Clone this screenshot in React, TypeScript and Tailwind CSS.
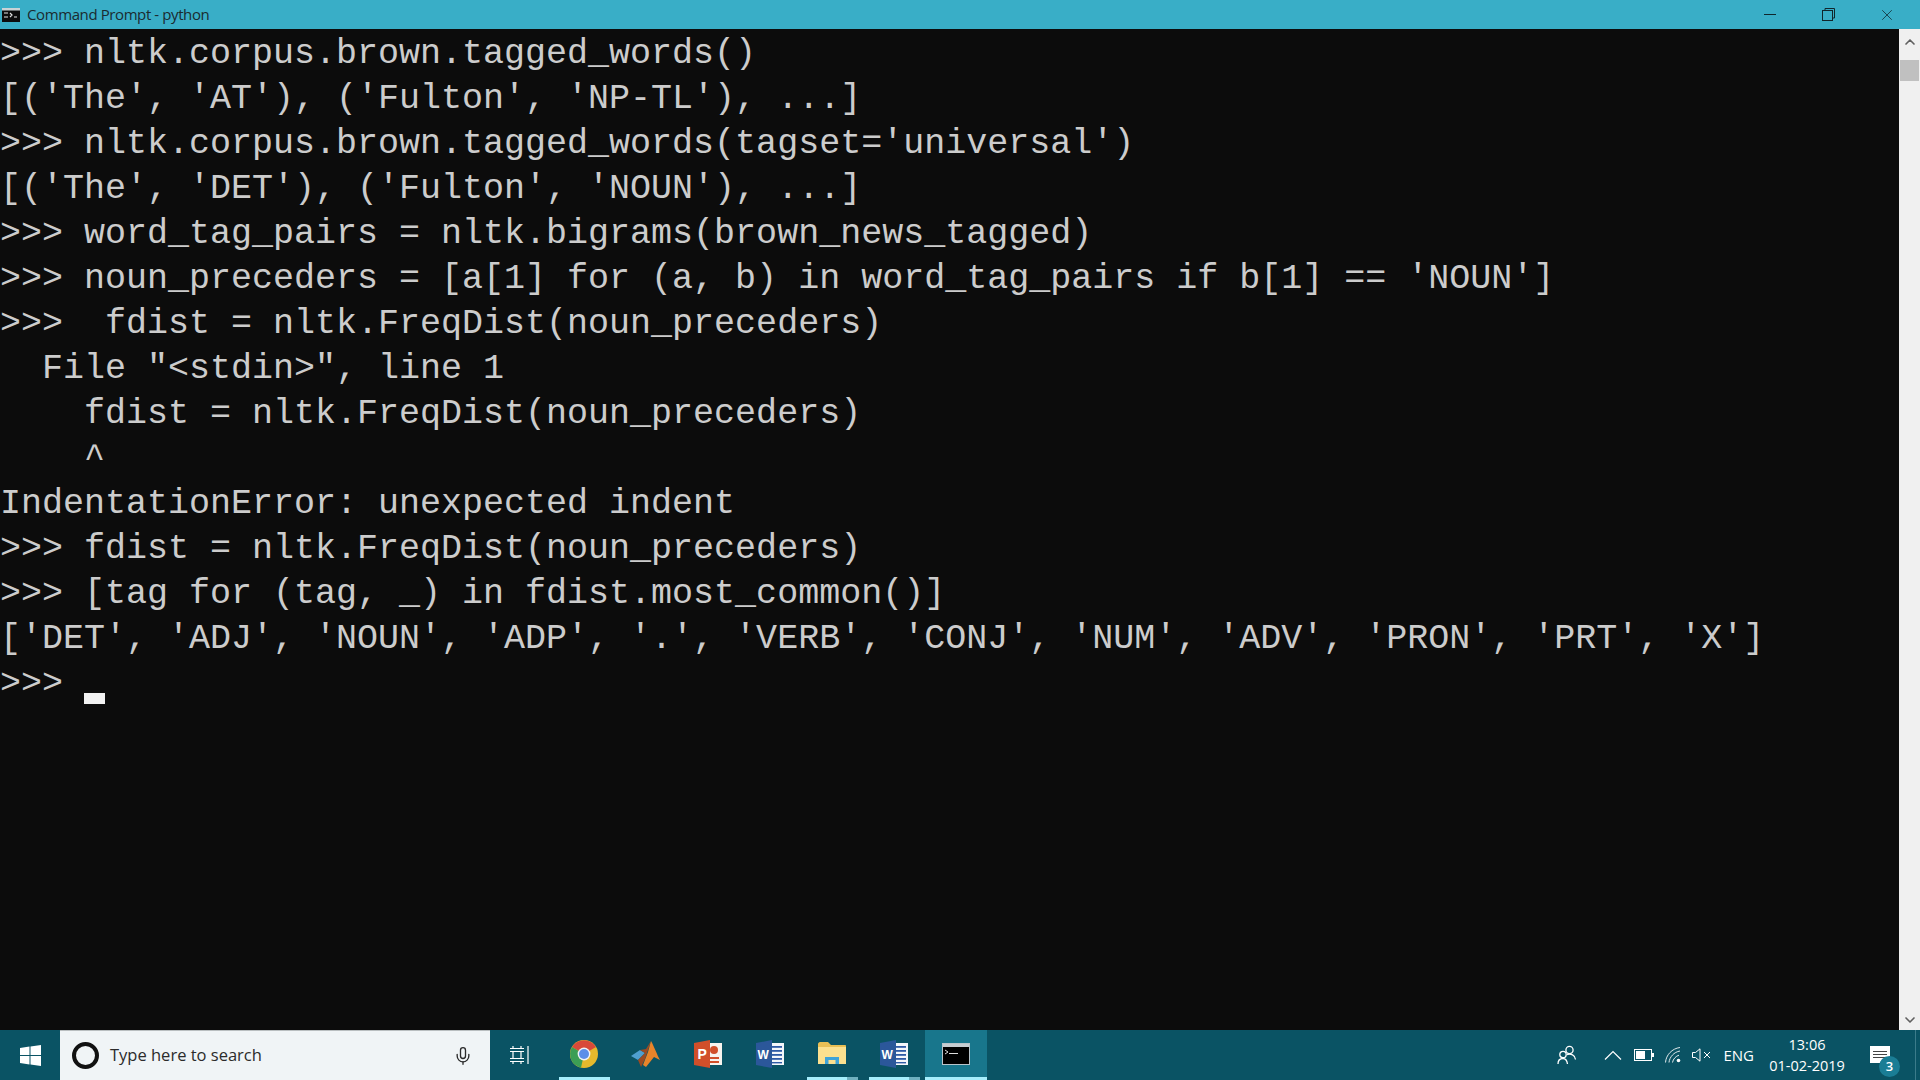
import { Mic, ChevronUp, ChevronDown, X } from "lucide-react";

const lines = [
  ">>> nltk.corpus.brown.tagged_words()",
  "[('The', 'AT'), ('Fulton', 'NP-TL'), ...]",
  ">>> nltk.corpus.brown.tagged_words(tagset='universal')",
  "[('The', 'DET'), ('Fulton', 'NOUN'), ...]",
  ">>> word_tag_pairs = nltk.bigrams(brown_news_tagged)",
  ">>> noun_preceders = [a[1] for (a, b) in word_tag_pairs if b[1] == 'NOUN']",
  ">>>  fdist = nltk.FreqDist(noun_preceders)",
  '  File "<stdin>", line 1',
  "    fdist = nltk.FreqDist(noun_preceders)",
  "    ^",
  "IndentationError: unexpected indent",
  ">>> fdist = nltk.FreqDist(noun_preceders)",
  ">>> [tag for (tag, _) in fdist.most_common()]",
  "['DET', 'ADJ', 'NOUN', 'ADP', '.', 'VERB', 'CONJ', 'NUM', 'ADV', 'PRON', 'PRT', 'X']",
];

const Chrome = () => (
  <svg width="28" height="28" viewBox="0 0 28 28">
    <circle cx="14" cy="14" r="14" fill="#e5b92c" />
    <path d="M14 14 L2 7 A14 14 0 0 1 26 7 Z" fill="#d8493a" />
    <path d="M14 14 L2 7 A14 14 0 0 0 11 27.7 Z" fill="#3c9e55" />
    <circle cx="14" cy="14" r="6.4" fill="#f1f3f4" />
    <circle cx="14" cy="14" r="5" fill="#5c8fe8" />
  </svg>
);

const Matlab = () => (
  <svg width="30" height="28" viewBox="0 0 30 28">
    <path d="M0 16 L9 10 L14 13 L7 20 Z" fill="#4f9fd0" />
    <path d="M9 10 L15 9 L20 1 L14 19 L10 27 L7 20 L14 13 Z" fill="#9c4a22" />
    <path d="M20 1 C23 6 26 15 29 20 L23 17 L15 27 L12 25 L17 12 Z" fill="#e8842a" />
  </svg>
);

const Ppt = () => (
  <svg width="28" height="28" viewBox="0 0 28 28">
    <rect x="12" y="3" width="16" height="22" fill="#f7f3ee" />
    <circle cx="20" cy="10" r="4" fill="#d14f2a" />
    <rect x="16" y="17" width="9" height="2" fill="#d14f2a" />
    <rect x="16" y="21" width="9" height="2" fill="#d14f2a" />
    <path d="M0 3 L16 0 V28 L0 25 Z" fill="#d14f2a" />
    <text x="3.5" y="19" fontSize="14" fontWeight="700" fill="#fff" fontFamily="'Liberation Sans', sans-serif">P</text>
  </svg>
);

const Word = () => (
  <svg width="28" height="28" viewBox="0 0 28 28">
    <rect x="12" y="3" width="16" height="22" fill="#f4f6fa" />
    <rect x="16" y="6" width="10" height="1.8" fill="#2f5aa6" />
    <rect x="16" y="10" width="10" height="1.8" fill="#2f5aa6" />
    <rect x="16" y="14" width="10" height="1.8" fill="#2f5aa6" />
    <rect x="16" y="18" width="10" height="1.8" fill="#2f5aa6" />
    <rect x="16" y="22" width="10" height="1.4" fill="#2f5aa6" />
    <path d="M0 3 L16 0 V28 L0 25 Z" fill="#2b579a" />
    <text x="1.5" y="18.5" fontSize="12" fontWeight="700" fill="#fff" fontFamily="'Liberation Sans', sans-serif">W</text>
  </svg>
);

const Folder = () => (
  <svg width="28" height="24" viewBox="0 0 28 24">
    <path d="M0 2 C0 1 1 0 2 0 H10 L13 3 H27 C27.6 3 28 3.4 28 4 V21 H0 Z" fill="#e8bf55" />
    <rect x="0" y="5" width="28" height="17" fill="#fbe08f" />
    <path d="M7 22 V15 H21 V22 H17.5 V18 H10.5 V22 Z" fill="#3fa3d8" />
  </svg>
);

const Cmd = () => (
  <svg width="28" height="22" viewBox="0 0 28 22">
    <rect x="0.5" y="0.5" width="27" height="21" fill="#000" stroke="#b7c4ca" />
    <rect x="1" y="1" width="26" height="3" fill="#c6cdd1" />
    <path d="M3 7 L6 9 L3 11" fill="none" stroke="#ddd" strokeWidth="1" />
    <rect x="7" y="10" width="9" height="1" fill="#ddd" />
  </svg>
);

// one slot of the taskbar, the underline marks a running app
const TaskIcon = ({ children, bar, split, active }: { children: React.ReactNode; bar?: boolean; split?: boolean; active?: boolean }) => (
  <div className={`relative flex h-full w-[62px] items-center justify-center pb-[2px] ${active ? "bg-[#18768c]" : ""}`}>
    {children}
    {bar && !split && <div className={`absolute bottom-0 h-[3px] bg-[#a6eefc] ${active ? "left-0 right-0" : "left-[6px] right-[5px]"}`} />}
    {split && (
      <div className="absolute bottom-0 left-[6px] right-[5px] flex h-[3px]">
        <div className="flex-1 bg-[#a6eefc]" />
        <div className="w-[11px] bg-[#6fb0bf]" />
      </div>
    )}
  </div>
);

const App = () => {
  return (
    <div className="flex h-[1080px] w-[1920px] flex-col overflow-hidden bg-[#0c0c0c]">
      {/* title bar */}
      <div className="flex h-[29px] items-center bg-[#39aec7] pl-[2px] text-[#1b2b30]">
        <svg width="18" height="14" viewBox="0 0 18 14" className="mr-[7px]">
          <rect width="18" height="14" fill="#0c0c0c" />
          <rect y="0" width="18" height="2.5" fill="#c9d3d6" />
          <path d="M2 5 H6 M2 9 H6 M8 5 L10 7 L8 9 M12 9 H15" stroke="#e3e3e3" strokeWidth="1.2" fill="none" />
        </svg>
        <span className="font-['Open_Sans',sans-serif] text-[15px] leading-none tracking-[-0.4px]">Command Prompt - python</span>
        <div className="ml-auto flex h-full items-center pr-[5px] text-[#10262c]">
          <div className="flex w-[58px] justify-center">
            <div className="h-[1px] w-[12px] bg-[#10262c]" />
          </div>
          <div className="flex w-[58px] justify-center">
            <svg width="13" height="13" viewBox="0 0 13 13" fill="none" stroke="#10262c">
              <rect x="0.5" y="2.5" width="10" height="10" />
              <path d="M3 2.5 V0.5 H12.5 V10 H10.5" />
            </svg>
          </div>
          <div className="flex w-[58px] justify-center pl-[1px]">
            <X size={18} strokeWidth={1} />
          </div>
        </div>
      </div>

      <div className="flex h-[1001px]">
        {/* console */}
        <div className="flex-1 whitespace-pre pt-[3px] font-['Liberation_Mono',monospace] text-[35px] leading-[45px] text-[#cccccc]">
          {lines.map((l, i) => (
            <div key={i} className="h-[45px]">
              {l}
            </div>
          ))}
          <div className="flex h-[45px] items-start">
            <span>&gt;&gt;&gt; </span>
            <div className="mt-[31px] h-[11px] w-[21px] bg-[#f2f2f2]" />
          </div>
        </div>

        {/* scrollbar */}
        <div className="flex w-[21px] flex-col items-center bg-[#f0f0f0] text-[#606060]">
          <div className="flex h-[22px] items-center justify-center pt-[3px]">
            <ChevronUp size={16} strokeWidth={2.5} />
          </div>
          <div className="mt-[9px] h-[21px] w-[19px] bg-[#c0c0c0]" />
          <div className="mt-auto flex h-[20px] items-center justify-center">
            <ChevronDown size={16} strokeWidth={2.5} />
          </div>
        </div>
      </div>

      {/* taskbar */}
      <div className="flex h-[50px] items-center bg-[#0a5364] text-white">
        <div className="flex h-full w-[60px] items-center justify-center">
          <svg width="21" height="21" viewBox="0 0 21 21" fill="#fff">
            <path d="M0 3 L9.5 1.6 V10 H0 Z M10.5 1.4 L21 0 V10 H10.5 Z M0 11 H9.5 V19.4 L0 18 Z M10.5 11 H21 V21 L10.5 19.6 Z" />
          </svg>
        </div>
        <div className="flex h-full w-[430px] items-center border-t border-[#b9bec0] bg-[#f0f4f6] pl-[12px] pr-[17px] text-[#2b2b2b]">
          <div className="h-[27px] w-[27px] rounded-full border-[4px] border-[#111]" />
          <span className="ml-[11px] font-['Open_Sans',sans-serif] text-[16.5px]">Type here to search</span>
          <Mic size={20} strokeWidth={1.6} className="ml-auto" />
        </div>
        <div className="flex h-full w-[63px] items-center justify-center pr-[4px]">
          <svg width="20" height="18" viewBox="0 0 20 18" fill="none" stroke="#fff" strokeWidth="1.2">
            <path d="M0 2.5 H14 M3 0 V2.5 M11 0 V2.5 M3 5.5 H11 V12.5 H3 Z M0 5.5 H3 M0 12.5 H3 M11 5.5 H14 M11 12.5 H14 M0 15.5 H14 M3 15.5 V18 M11 15.5 V18 M18 0 V18" />
          </svg>
        </div>
        <TaskIcon bar>
          <Chrome />
        </TaskIcon>
        <TaskIcon>
          <Matlab />
        </TaskIcon>
        <TaskIcon>
          <Ppt />
        </TaskIcon>
        <TaskIcon>
          <Word />
        </TaskIcon>
        <TaskIcon split>
          <Folder />
        </TaskIcon>
        <TaskIcon split>
          <Word />
        </TaskIcon>
        <TaskIcon bar active>
          <Cmd />
        </TaskIcon>

        {/* tray */}
        <div className="ml-auto flex h-full items-center">
          <svg width="20" height="20" viewBox="0 0 20 20" fill="none" stroke="#fff" strokeWidth="1.3" className="mr-[27px]">
            <circle cx="12.5" cy="5" r="3.6" />
            <circle cx="6" cy="9.5" r="3.2" />
            <path d="M1 19 C1 15 3 13.5 6 13.5 C9 13.5 10 15.5 10.5 19 M10 9.5 C14 8.5 18 10 18.5 14.5" />
          </svg>
          <svg width="18" height="10" viewBox="0 0 18 10" fill="none" stroke="#fff" strokeWidth="1.2" className="mr-[12px]">
            <path d="M1 9.5 L9 1.5 L17 9.5" />
          </svg>
          <svg width="20" height="12" viewBox="0 0 20 12" className="mr-[11px]">
            <rect x="0.5" y="0.5" width="17" height="11" fill="none" stroke="#fff" />
            <rect x="2" y="2" width="9" height="8" fill="#fff" />
            <rect x="18" y="4" width="2" height="4" fill="#fff" />
          </svg>
          <svg width="16" height="16" viewBox="0 0 16 16" fill="none" stroke="#dfe9ec" strokeWidth="1" className="mr-[11px]">
            <path d="M0.5 15.5 C1 8 7 1.5 15 0.5 M4 15.5 C4.5 10 9 5 15 4 M7.5 15.5 C8 12 11 9 14 8.2" />
            <circle cx="13.5" cy="13.5" r="1.8" fill="#fff" stroke="none" />
          </svg>
          <svg width="19" height="14" viewBox="0 0 19 14" fill="none" stroke="#fff" strokeWidth="1" className="mr-[12px]">
            <path d="M0.5 4.5 H3.5 L8 0.8 V13.2 L3.5 9.5 H0.5 Z M12 4 L18 10 M18 4 L12 10" />
          </svg>
          <span className="mr-[14px] font-['Open_Sans',sans-serif] text-[15px]">ENG</span>
          <div className="mr-[24px] flex w-[78px] flex-col items-center font-['Open_Sans',sans-serif] text-[14.5px] leading-[21px]">
            <span>13:06</span>
            <span>01-02-2019</span>
          </div>
          <div className="relative mr-[25px] h-[18px] w-[20px]">
            <div className="flex h-[17px] w-[20px] flex-col justify-center gap-[2px] bg-white px-[3px]">
              <div className="h-[1px] bg-[#444]" />
              <div className="h-[1px] bg-[#444]" />
              <div className="h-[1px] bg-[#444]" />
            </div>
            <div className="absolute left-[9px] top-[10px] flex h-[21px] w-[21px] items-center justify-center rounded-full bg-[#1a7d95] font-['Open_Sans',sans-serif] text-[13px] font-semibold">
              3
            </div>
          </div>
          <div className="h-full w-[1px] bg-[#3b7b8a]" />
          <div className="w-[4px]" />
        </div>
      </div>
    </div>
  );
};

export default App;
